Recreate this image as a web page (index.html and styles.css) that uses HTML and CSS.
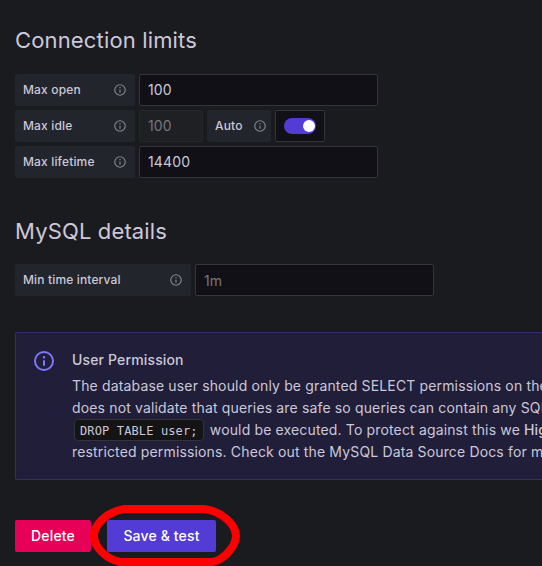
FILE: index.html
```html
<!DOCTYPE html>
<html lang="en">
<head>
<meta charset="utf-8">
<title>MySQL data source settings</title>
<link rel="stylesheet" href="styles.css">
</head>
<body>
<svg class="defs" width="0" height="0" aria-hidden="true">
  <symbol id="info" viewBox="0 0 24 24"><path d="M12 2a10 10 0 1 0 10 10A10 10 0 0 0 12 2Zm0 18a8 8 0 1 1 8-8 8 8 0 0 1-8 8Zm0-9a1 1 0 0 0-1 1v4a1 1 0 0 0 2 0v-4a1 1 0 0 0-1-1Zm0-4a1.250 1.250 0 1 0 1.250 1.250A1.250 1.250 0 0 0 12 7Z"/></symbol>
</svg>
<main class="page">
  <section class="group">
    <h3 class="title">Connection limits</h3>
    <div class="row">
      <label class="label">Max open<svg class="hint"><use href="#info"/></svg></label>
      <div class="input">100</div>
    </div>
    <div class="row">
      <label class="label">Max idle<svg class="hint"><use href="#info"/></svg></label>
      <div class="input input-disabled">100</div>
      <label class="label label-auto">Auto<svg class="hint"><use href="#info"/></svg></label>
      <div class="switch-box"><span class="switch"><span class="knob"></span></span></div>
    </div>
    <div class="row">
      <label class="label">Max lifetime<svg class="hint"><use href="#info"/></svg></label>
      <div class="input">14400</div>
    </div>
  </section>
  <section class="group group-details">
    <h3 class="title">MySQL details</h3>
    <div class="row">
      <label class="label label-wide">Min time interval<svg class="hint"><use href="#info"/></svg></label>
      <div class="input placeholder">1m</div>
    </div>
  </section>
  <section class="alert">
    <svg class="alert-icon"><use href="#info"/></svg>
    <div class="alert-body">
      <div class="alert-title">User Permission</div>
      <p class="alert-text">The database user should only be granted SELECT permissions on the<br>
      does not validate that queries are safe so queries can contain any SQL<br>
      <code>DROP TABLE user;</code> would be executed. To protect against this we <strong>Highly</strong><br>
      restricted permissions. Check out the MySQL Data Source Docs for more</p>
    </div>
  </section>
  <div class="actions">
    <button class="button delete">Delete</button>
    <div class="marked">
      <button class="button save">Save &amp; test</button>
      <svg class="marker" viewBox="0 0 150 62"><path d="M34 4H114C132 6 146 20 146 31S132 56 122 57H30C16 54 4 42 4 31S16 7 34 4Z"/></svg>
    </div>
  </div>
</main>
</body>
</html>
```
FILE: styles.css
```css
* { box-sizing: border-box; }
body {
  margin: 0;
  width: 542px;
  height: 566px;
  overflow: hidden;
  background: #1a1b1f;
  color: #ccc8da;
  font: 400 14px/22px Inter, "Liberation Sans", sans-serif;
  letter-spacing: 0.15px;
}
.defs { position: absolute; }
.page { padding: 27px 0 0 15px; }
.title {
  margin: 0 0 20px;
  font-size: 22px;
  font-weight: 400;
  line-height: 27px;
  letter-spacing: 0.15px;
}
.group-details { margin-top: 40px; }
.group-details .title { margin-bottom: 19px; }
.row { display: flex; gap: 4px; margin-bottom: 4px; }
.label {
  display: flex;
  align-items: center;
  justify-content: space-between;
  width: 120px;
  height: 32px;
  padding: 0 8px;
  border-radius: 2px;
  background: #22252b;
  font-size: 12px;
  font-weight: 500;
}
.label-auto { width: 64px; padding-right: 4px; }
.label-wide { width: 176px; }
.hint { width: 14px; height: 14px; fill: #85838f; }
.input {
  width: 239px;
  height: 32px;
  padding: 0 8px;
  border: 1px solid #34343b;
  border-radius: 2px;
  background: #111016;
  line-height: 30px;
}
.input-disabled { width: 64px; background: #1f2024; border-color: #26272b; color: #777581; }
.placeholder { color: #777581; line-height: 32px; }
.switch-box {
  display: flex;
  align-items: center;
  width: 50px;
  height: 32px;
  padding: 0 8px;
  border: 1px solid #34343b;
  border-radius: 2px;
  background: #111016;
}
.switch {
  display: flex;
  align-items: center;
  justify-content: flex-end;
  width: 32px;
  height: 16px;
  padding-right: 1px;
  border-radius: 8px;
  background: #533bd6;
}
.knob { width: 12px; height: 12px; border-radius: 50%; background: #fff; }
.alert {
  display: flex;
  width: 527px;
  height: 148px;
  margin-top: 36px;
  padding: 16px 0 14px 16px;
  border: 1px solid #322f66;
  border-right: 0;
  border-radius: 2px 0 0 2px;
  background: #201e38;
}
.alert-icon { flex: none; width: 24px; height: 24px; margin: 0 16px 0 0; fill: #7b78f8; }
.alert-body { flex: 1; min-width: 0; overflow: hidden; white-space: nowrap; }
.alert-title { font-weight: 500; line-height: 22px; }
.alert-text { margin: 4px 0 0; }
.alert-text strong { font-weight: 500; }
code {
  display: inline-block;
  height: 22px;
  margin: 0 2px;
  padding: 0 5px;
  border: 1px solid #333235;
  border-radius: 4px;
  background: #141414;
  font: 12px/22px "DejaVu Sans Mono", monospace;
  letter-spacing: 0.13px;
  vertical-align: top;
}
.actions { display: flex; gap: 16px; margin-top: 40px; }
.button {
  display: block;
  height: 32px;
  padding: 0;
  border: 0;
  border-radius: 2px;
  color: #fff;
  font: 500 14px/32px Inter, "Liberation Sans", sans-serif;
  letter-spacing: 0.15px;
}
.delete { width: 76px; background: #e70058; }
.save { width: 109px; background: #533bd6; }
.marked { position: relative; }
.marker {
  position: absolute;
  top: -15px;
  left: -17px;
  width: 150px;
  height: 62px;
  fill: none;
  stroke: #f00;
  stroke-width: 8px;
}
```
